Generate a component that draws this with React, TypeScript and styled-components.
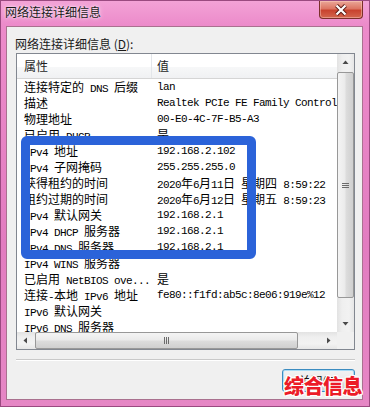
import React from 'react';
import styled, { createGlobalStyle } from 'styled-components';

const GlobalStyle = createGlobalStyle`
  html, body {
    margin: 0;
    padding: 0;
    background: #e984c6;
  }
  body {
    width: 370px;
    height: 407px;
    overflow: hidden;
  }
`;

const Frame = styled.div`
  position: relative;
  width: 370px;
  height: 407px;
  box-sizing: border-box;
  display: flex;
  flex-direction: column;
  border: 1px solid #9a4a80;
  background: linear-gradient(180deg, #f3a2d6 0%, #ec8bca 24px, #e27cc0 60%, #e687c5 100%);
  font-family: 'Noto Sans CJK SC', sans-serif;
  color: #111;
`;

const TitleBar = styled.div`
  height: 25px;
  display: flex;
  align-items: flex-start;
  justify-content: space-between;
  padding-left: 4px;
`;

const Title = styled.div`
  font-size: 12px;
  line-height: 22px;
  color: #1a1a1a;
  text-shadow: 0 0 5px rgba(255, 255, 255, 0.9), 0 0 2px rgba(255, 255, 255, 0.8);
`;

const CloseButton = styled.div`
  width: 44px;
  height: 18px;
  margin-right: 6px;
  box-sizing: border-box;
  border: 1px solid #7b2f2a;
  border-top: none;
  border-radius: 0 0 4px 4px;
  background: linear-gradient(180deg, #eaa898 0%, #dc7563 45%, #c8432e 55%, #d3664e 100%);
  box-shadow: inset 0 0 0 1px rgba(255, 210, 200, 0.45);
  display: flex;
  align-items: center;
  justify-content: center;
`;

const Client = styled.div`
  flex: 1;
  margin: 0 6px 6px 5px;
  box-sizing: border-box;
  background: #f0f0f0;
  border: 1px solid #a9718f;
  padding: 9px 7px 0 8px;
  display: flex;
  flex-direction: column;
`;

const Label = styled.div`
  font-size: 12px;
  line-height: 16px;
  color: #1a1a1a;
`;

const List = styled.div`
  margin: 1px 0 0 1px;
  height: 297px;
  box-sizing: border-box;
  border: 1px solid #828790;
  background: #fff;
  display: grid;
  grid-template-columns: 1fr 17px;
  grid-template-rows: 1fr 17px;
`;

const Content = styled.div`
  overflow: hidden;
`;

const Header = styled.div`
  display: flex;
  height: 25px;
  box-sizing: border-box;
  border-bottom: 1px solid #d5d5d5;
  background: linear-gradient(180deg, #ffffff 0%, #ffffff 55%, #f6f7f8 56%, #f0f1f3 100%);
`;

const HeadCell = styled.div<{ $first?: boolean }>`
  font-size: 12px;
  line-height: 24px;
  color: #1e1e1e;
  box-sizing: border-box;
  padding-left: ${(p) => (p.$first ? '7px' : '5px')};
  width: ${(p) => (p.$first ? '135px' : 'auto')};
  flex: ${(p) => (p.$first ? 'none' : '1')};
  border-right: ${(p) => (p.$first ? '1px solid #e3e6ea' : 'none')};
`;

const Row = styled.div`
  display: flex;
  height: 16px;
  line-height: 16px;
  font-family: 'Liberation Mono', monospace;
  font-size: 11px;
  letter-spacing: -0.6px;
  color: #000;
`;

const Cell = styled.div<{ $first?: boolean }>`
  box-sizing: border-box;
  white-space: nowrap;
  overflow: hidden;
  padding-left: ${(p) => (p.$first ? '7px' : '5px')};
  width: ${(p) => (p.$first ? '135px' : 'auto')};
  flex: ${(p) => (p.$first ? 'none' : '1')};
`;

const Han = styled.span`
  font-family: 'Noto Sans CJK SC', sans-serif;
  font-size: 12px;
  letter-spacing: 0;
`;

const VScroll = styled.div`
  display: flex;
  flex-direction: column;
  background: linear-gradient(90deg, #e2e2e2 0%, #efefef 30%, #f2f2f2 70%, #e6e6e6 100%);
`;

const HScroll = styled.div`
  display: flex;
  background: linear-gradient(180deg, #e2e2e2 0%, #efefef 30%, #f2f2f2 70%, #e6e6e6 100%);
`;

const Corner = styled.div`
  background: #f0f0f0;
`;

const ArrowBox = styled.div`
  width: 17px;
  height: 17px;
  flex: none;
  display: flex;
  align-items: center;
  justify-content: center;
`;

const Thumb = styled.div<{ $vertical?: boolean }>`
  box-sizing: border-box;
  border: 1px solid #989898;
  border-radius: 2px;
  display: flex;
  align-items: center;
  justify-content: center;
  ${(p) =>
    p.$vertical
      ? `
    height: 226px;
    margin: 1px 0 0 0;
    background: linear-gradient(90deg, #f4f4f4 0%, #ebebeb 45%, #dcdcdc 55%, #cfcfcf 100%);
  `
      : `
    width: 263px;
    margin-left: 1px;
    background: linear-gradient(180deg, #f4f4f4 0%, #ebebeb 45%, #dcdcdc 55%, #cfcfcf 100%);
  `}
`;

const Spacer = styled.div`
  flex: 1;
`;

const Separator = styled.div`
  margin: 9px 0 0 1px;
  border-top: 1px solid #c9c9c9;
  border-bottom: 1px solid #ffffff;
`;

const ButtonRow = styled.div`
  display: flex;
  justify-content: flex-end;
  margin-top: 8px;
`;

const Button = styled.div`
  width: 73px;
  height: 23px;
  box-sizing: border-box;
  border: 1px solid #3c8cc0;
  border-radius: 3px;
  background: linear-gradient(180deg, #f2f2f2 0%, #ebebeb 49%, #dddddd 51%, #cfcfcf 100%);
  box-shadow: inset 0 0 0 1px #a8dcf5;
  font-size: 12px;
  line-height: 21px;
  text-align: center;
  color: #111;
`;

const Annotation = styled.div`
  position: absolute;
  left: 20px;
  top: 135px;
  width: 235px;
  height: 123px;
  box-sizing: border-box;
  border: 9px solid #2b63d9;
  border-radius: 6px;
`;

const Watermark = styled.div`
  position: absolute;
  right: 7px;
  bottom: 8px;
  font-family: 'Noto Sans CJK SC', sans-serif;
  font-size: 20px;
  font-weight: 900;
  line-height: 24px;
  letter-spacing: -0.5px;
  color: #ec1c28;
  text-shadow: 1px 1px 0 #fff, -1px -1px 0 #fff, 1px -1px 0 #fff, -1px 1px 0 #fff, 0 1px 0 #fff,
    0 -1px 0 #fff, 1px 0 0 #fff, -1px 0 0 #fff;
`;

const rows: [string, string][] = [
  ['连接特定的 DNS 后缀', 'lan'],
  ['描述', 'Realtek PCIe FE Family Controller'],
  ['物理地址', '00-E0-4C-7F-B5-A3'],
  ['已启用 DHCP', '是'],
  ['IPv4 地址', '192.168.2.102'],
  ['IPv4 子网掩码', '255.255.255.0'],
  ['获得租约的时间', '2020年6月11日 星期四 8:59:22'],
  ['租约过期的时间', '2020年6月12日 星期五 8:59:23'],
  ['IPv4 默认网关', '192.168.2.1'],
  ['IPv4 DHCP 服务器', '192.168.2.1'],
  ['IPv4 DNS 服务器', '192.168.2.1'],
  ['IPv4 WINS 服务器', ''],
  ['已启用 NetBIOS ove...', '是'],
  ['连接-本地 IPv6 地址', 'fe80::f1fd:ab5c:8e06:919e%12'],
  ['IPv6 默认网关', ''],
  ['IPv6 DNS 服务器', ''],
];

// latin runs stay in the 6px mono, han runs get the 12px cjk font
const mixed = (text: string) =>
  text
    .split(/([\u2E80-\u9FFF\uFF00-\uFFEF]+)/)
    .map((part, i) => (i % 2 ? <Han key={i}>{part}</Han> : part));

const rotation = { up: 0, right: 90, down: 180, left: 270 };

const Arrow: React.FC<{ dir: keyof typeof rotation }> = ({ dir }) => (
  <ArrowBox>
    <svg width="7" height="7" viewBox="0 0 7 7" style={{ transform: `rotate(${rotation[dir]}deg)` }}>
      <path d="M3.5 1.5 L6.5 5 L0.5 5 Z" fill="#4a4a4a" />
    </svg>
  </ArrowBox>
);

const Grip: React.FC<{ vertical?: boolean }> = ({ vertical }) => (
  <svg width="7" height="7" viewBox="0 0 7 7" style={{ transform: vertical ? 'none' : 'rotate(90deg)' }}>
    <path d="M0 1.5 H7 M0 3.5 H7 M0 5.5 H7" stroke="#6b6b6b" strokeWidth="1" />
  </svg>
);

const App: React.FC = () => {
  return (
    <>
      <GlobalStyle />
      <Frame>
        <TitleBar>
          <Title>网络连接详细信息</Title>
          <CloseButton>
            <svg width="14" height="12" viewBox="0 0 14 12">
              <path d="M2.5 1.5 L11.5 10.5 M11.5 1.5 L2.5 10.5" stroke="#5a1a14" strokeWidth="4" />
              <path d="M2.5 1.5 L11.5 10.5 M11.5 1.5 L2.5 10.5" stroke="#ffffff" strokeWidth="2.2" />
            </svg>
          </CloseButton>
        </TitleBar>
        <Client>
          <Label>
            网络连接详细信息 (<u>D</u>):
          </Label>
          <List>
            <Content>
              <Header>
                <HeadCell $first>属性</HeadCell>
                <HeadCell>值</HeadCell>
              </Header>
              {rows.map(([name, value]) => (
                <Row key={name}>
                  <Cell $first>{mixed(name)}</Cell>
                  <Cell>{mixed(value)}</Cell>
                </Row>
              ))}
            </Content>
            <VScroll>
              <Arrow dir="up" />
              <Thumb $vertical>
                <Grip vertical />
              </Thumb>
              <Spacer />
              <Arrow dir="down" />
            </VScroll>
            <HScroll>
              <Arrow dir="left" />
              <Thumb>
                <Grip />
              </Thumb>
              <Spacer />
              <Arrow dir="right" />
            </HScroll>
            <Corner />
          </List>
          <Separator />
          <ButtonRow>
            <Button>关闭(C)</Button>
          </ButtonRow>
        </Client>
        <Annotation />
        <Watermark>综合信息</Watermark>
      </Frame>
    </>
  );
};

export default App;
